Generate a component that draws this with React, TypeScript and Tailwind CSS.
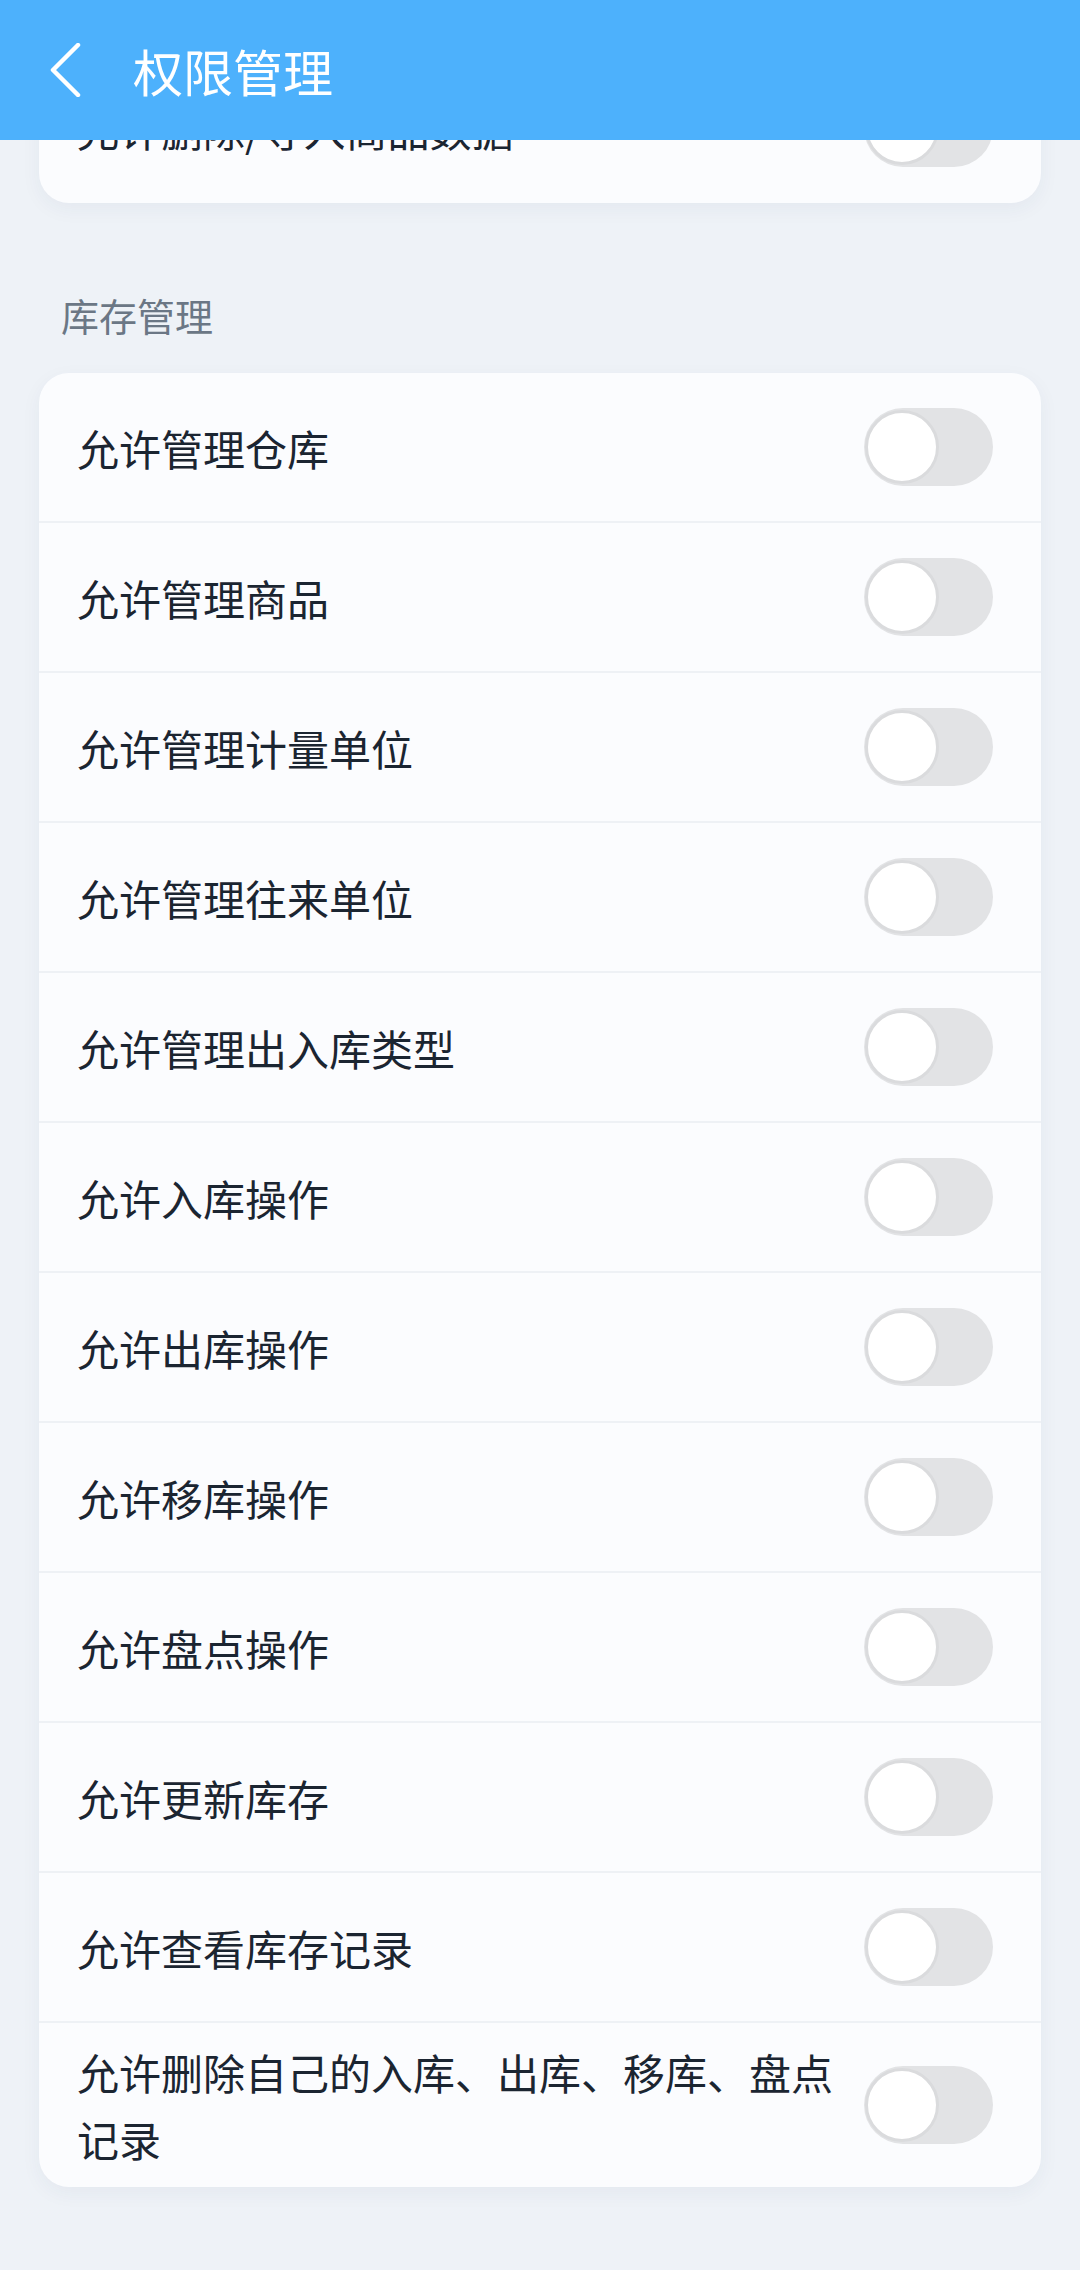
import React from "react";

const items = [
  "允许管理仓库",
  "允许管理商品",
  "允许管理计量单位",
  "允许管理往来单位",
  "允许管理出入库类型",
  "允许入库操作",
  "允许出库操作",
  "允许移库操作",
  "允许盘点操作",
  "允许更新库存",
  "允许查看库存记录",
  "允许删除自己的入库、出库、移库、盘点记录",
];

function Toggle() {
  return (
    <div className="flex h-[78px] w-[129px] shrink-0 items-center rounded-full bg-[#e2e3e5] pl-[1px]">
      <div className="h-[74px] w-[74px] rounded-full border-[3px] border-[#dadbdd] bg-white" />
    </div>
  );
}

function Row({ label, last }: { label: string; last?: boolean }) {
  return (
    <div
      className={
        "flex min-h-[150px] items-center gap-[24px] pl-[38px] pr-[48px] py-[15px] " +
        (last ? "" : "border-b-2 border-[#eef1f5]")
      }
    >
      <div className="flex-1 text-[42px] leading-[67px] text-[#1b2531]">{label}</div>
      <Toggle />
    </div>
  );
}

export default function App() {
  return (
    <div
      className="relative min-h-[2270px] bg-[#eef2f7]"
      style={{ fontFamily: '"Noto Sans CJK SC", "Noto Sans", sans-serif' }}
    >
      <div className="fixed left-0 right-0 top-0 z-10 flex h-[140px] items-center bg-[#4db1fc] pl-[50px]">
        <svg width="32" height="54" viewBox="0 0 32 54" fill="none">
          <polyline
            points="28,2 3,27 28,52"
            stroke="white"
            strokeWidth="4.5"
            strokeLinecap="round"
            strokeLinejoin="round"
          />
        </svg>
        <div className="ml-[51px] text-[50px] leading-none text-white">权限管理</div>
      </div>

      <div className="px-[39px] pt-[53px] pb-[85px]">
        <div className="overflow-hidden rounded-b-[30px] bg-[#fbfcfe] shadow-[0_6px_20px_rgba(30,60,90,0.05)]">
          <Row label="允许删除/导入商品数据" last />
        </div>

        <div className="mt-[84px] mb-[30px] pl-[22px] text-[38px] leading-[56px] text-[#6b7785]">
          库存管理
        </div>

        <div className="overflow-hidden rounded-[30px] bg-[#fbfcfe] shadow-[0_6px_20px_rgba(30,60,90,0.05)]">
          {items.map((label, i) => (
            <Row key={label} label={label} last={i === items.length - 1} />
          ))}
        </div>
      </div>
    </div>
  );
}
